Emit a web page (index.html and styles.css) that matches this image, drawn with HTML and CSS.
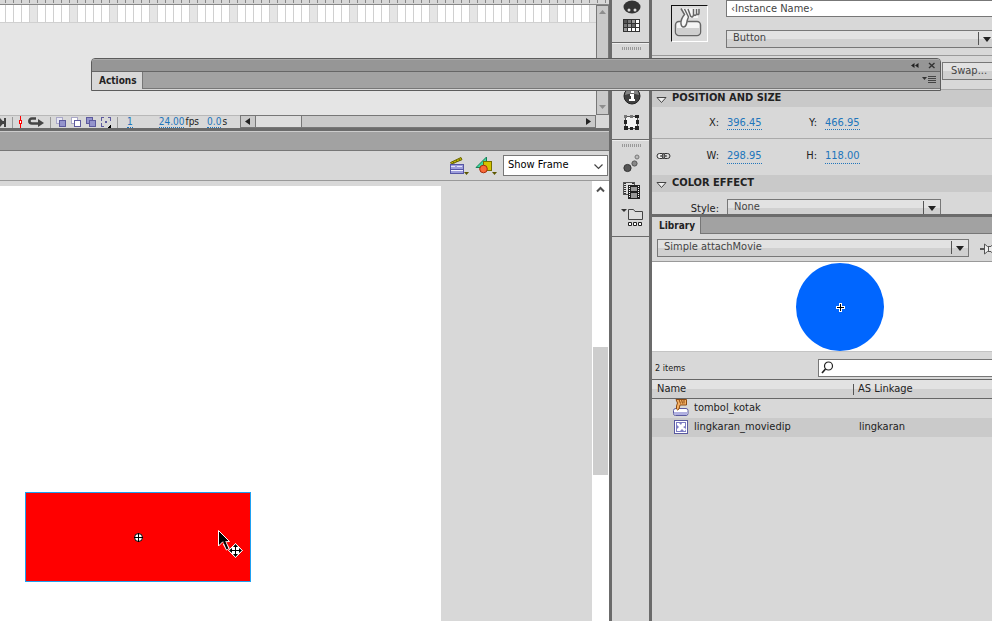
FILE: index.html
```html
<!DOCTYPE html>
<html lang="en">
<head>
<meta charset="utf-8">
<title>Simple attachMovie</title>
<link rel="stylesheet" href="styles.css">
</head>
<body>
<div class="app">
  <main class="workspace">
    <section class="timeline" aria-label="Timeline">
      <div class="frames-area">
        <div class="ruler"></div>
        <div class="frames-body">
          <div class="frames"><div class="frame-row"></div></div>
          <div class="vscroll" aria-hidden="true">
            <svg width="7" height="5"><path d="M0 4L3.5 0L7 4z" fill="#8d8d8d"/></svg>
            <svg width="7" height="5"><path d="M0 0L3.500 4L7 0z" fill="#8d8d8d"/></svg>
          </div>
        </div>
      </div>
      <div class="status">
        <div class="status-tools">
          <button class="tool end" aria-label="Last frame"><svg width="7" height="11"><path d="M0 1L4 5.500L0 10z" fill="#444"/><path d="M0 4h4v3H0zM4 1h2v9H4z" fill="#444"/></svg></button>
          <i class="rule"></i>
          <button class="tool" aria-label="Center frame"><svg width="5" height="12" shape-rendering="crispEdges"><path d="M2 0h1v5H2zM2 8h1v4H2z" fill="#f00"/><path d="M1.500 4.500h2v3h-2z" fill="#fff" stroke="#f00"/></svg></button>
          <button class="tool" aria-label="Loop"><svg width="18" height="12"><path d="M9 2.500H5C1.500 2.500 1.500 7.500 5 7.500H12" fill="none" stroke="#444" stroke-width="2.600"/><path d="M11 3L17 7L11 11z" fill="#444"/></svg></button>
          <i class="rule"></i>
          <button class="tool" aria-label="Onion skin"><svg width="11" height="11" shape-rendering="crispEdges"><rect x=".5" y=".5" width="6" height="6" fill="#e8e8f4" stroke="#aaa8c8"/><rect x="3.500" y="3.500" width="6" height="6" fill="#9494cc" stroke="#5d5a9e"/></svg></button>
          <button class="tool" aria-label="Onion skin outlines"><svg width="11" height="11" shape-rendering="crispEdges"><rect x=".5" y=".5" width="6" height="6" fill="#fff" stroke="#aaa8c8"/><rect x="3.500" y="3.500" width="6" height="6" fill="#fff" stroke="#5d5a9e"/></svg></button>
          <button class="tool" aria-label="Edit multiple frames"><svg width="11" height="11" shape-rendering="crispEdges"><rect x=".5" y=".5" width="6" height="6" fill="#9494cc" stroke="#5d5a9e"/><rect x="3.500" y="3.500" width="6" height="6" fill="#9494cc" stroke="#5d5a9e"/></svg></button>
          <button class="tool" aria-label="Modify markers"><svg width="11" height="11" shape-rendering="crispEdges"><path d="M3 .5H.5V4M.5 6v3.500H3M7 .5h2.500V4" fill="none" stroke="#5d5a9e"/><path d="M4 4h2v2H4z" fill="#5d5a9e"/><path d="M10 7v4H6z"/></svg></button>
          <i class="rule"></i>
          <span class="hot frame-no">1</span>
          <span class="reading fps"><span class="hot">24.00</span><span>fps</span></span>
          <span class="reading"><span class="hot">0.0</span><span>s</span></span>
        </div>
        <div class="hscroll" aria-hidden="true">
          <svg width="14" height="11"><path d="M9 2v7L4 5.500z" fill="#222"/></svg>
          <span class="hthumb"></span>
          <svg width="14" height="11"><path d="M5 2v7L10 5.500z" fill="#222"/></svg>
        </div>
      </div>
    </section>
    <div class="doc-tabs"></div>
    <div class="edit-bar">
      <button class="tool" aria-label="Edit scene"><svg width="20" height="20"><path d="M1.500 6.500L12 1.500l1 2.200L2.500 8z" fill="#c4bb00" stroke="#6a6400"/><path d="M4 5.500l1 2M7 4l1 2M10 3l1 2" stroke="#6a6400"/><rect x="1.500" y="8.500" width="13" height="9" fill="#f1f1fc" stroke="#5656a4"/><path d="M2 9h12v4H2zM2 15h12v2H2z" fill="#9d9ddc"/><path d="M2 10.500h4M8 10.500h5" stroke="#e4e4fa"/><path d="M2 13.500h12" stroke="#5656a4"/><path d="M15 16h5l-2.500 3z" fill="#5c5700"/></svg></button>
      <button class="tool" aria-label="Edit symbols"><svg width="22" height="20"><path d="M1 11.500L11.500 1v10.500z" fill="#3fd9a0" stroke="#158057"/><rect x="8.500" y="5.500" width="8" height="9" fill="#d3c400" stroke="#776f00"/><circle cx="8.500" cy="13" r="3.800" fill="#fa6a38" stroke="#a52c0b"/><path d="M17 16h5l-2.500 3z" fill="#5c5700"/></svg></button>
      <div class="picker zoom-picker">
        <select aria-label="Zoom"><option>Show Frame</option></select>
        <svg width="9" height="6"><path d="M.5 .5L4.500 4.500L8.500 .5" fill="none" stroke="#444" stroke-width="1.200"/></svg>
      </div>
    </div>
    <div class="stage-area">
      <div class="pasteboard">
        <div class="canvas">
          <div class="shape">
            <svg width="9" height="9"><circle cx="4.500" cy="4.500" r="4" fill="#fff" stroke="#000"/><path d="M4.500 0v9M0 4.500h9" stroke="#000"/></svg>
          </div>
          <svg class="cursor" width="27" height="29">
            <path d="M6.500 13L10 19.500" stroke="#fff" stroke-width="4"/>
            <path d="M.5 .5V16L4.500 12L11.500 11.500z" fill="#000" stroke="#fff"/>
            <path d="M6 11L9.500 19" stroke="#000" stroke-width="2"/>
            <path d="M17.500 13.500L24.500 20.500L17.500 27.500L10.500 20.500z" fill="#fff" stroke="#fff"/>
            <path d="M17.500 15v11M12 20.500h11" stroke="#000"/>
            <path d="M17.500 14l2.500 3h-5zM17.500 27l2.500-3h-5zM11 20.500l3-2.500v5zM24 20.500l-3-2.500v5z"/>
          </svg>
        </div>
      </div>
      <div class="stage-scroll" aria-hidden="true">
        <svg width="9" height="7"><path d="M1 5.500L4.500 2L8 5.500" fill="none" stroke="#505050" stroke-width="2"/></svg>
        <span class="stage-thumb"></span>
      </div>
    </div>
  </main>

  <nav class="dock" aria-label="Panels">
    <div class="dock-group first">
      <button class="tool" aria-label="Color"><svg width="20" height="20"><ellipse cx="10" cy="9" rx="8.500" ry="6.500" fill="#333"/><circle cx="7" cy="12" r="1.500" fill="#ddd"/><circle cx="13" cy="12" r="1.500" fill="#ddd"/></svg></button>
      <button class="tool" aria-label="Swatches"><svg width="20" height="16" shape-rendering="crispEdges"><rect x="1" y="1" width="17" height="13" fill="#333"/><path fill="#555" d="M2 2h3v3H2z"/><path fill="#777" d="M6 2h3v3H6zM2 6h3v3H2z"/><path fill="#999" d="M10 2h3v3h-3zM6 6h3v3H6zM2 10h3v3H2z"/><path fill="#666" d="M10 6h3v3h-3z"/><path fill="#fff" d="M14 2h3v3h-3zM14 6h3v3h-3zM6 10h3v3H6zM10 10h3v3h-3zM14 10h3v3h-3z"/></svg></button>
    </div>
    <div class="dock-group second">
      <i class="grip"></i>
      <button class="tool info" aria-label="Info"><svg width="20" height="20"><circle cx="10" cy="10" r="8" fill="#404040" stroke="#222"/><path d="M3 9a7 7 0 0 1 14 0q-7-3-14 0" fill="#858585"/><path d="M8 8h4v5h1v2H7v-2h2v-3H8zM9 5h3v2H9z" fill="#fff"/></svg></button>
      <button class="tool" aria-label="Transform"><svg width="20" height="18"><rect x="3.500" y="2.500" width="12" height="12" fill="#f3f3f3" stroke="#555"/><path d="M2 6h3v4H2zM14 6h3v4h-3zM2 12h4v4H2zM13 12h4v4h-4zM8 13h3v3H8zM13 1h4v3h-4z" fill="#222"/><path d="M2 1h3v3H2zM8 1h3v3H8z" fill="#777"/></svg></button>
    </div>
    <div class="dock-group third">
      <i class="grip"></i>
      <button class="tool" aria-label="Motion presets"><svg width="20" height="20"><circle cx="5.500" cy="14" r="3.600" fill="#555" stroke="#333"/><circle cx="12.500" cy="9.500" r="2.600" fill="#888" stroke="#555"/><circle cx="15" cy="3" r="2" fill="#bbb" stroke="#777"/></svg></button>
      <button class="tool" aria-label="Movie explorer"><svg width="20" height="20"><rect x="1.500" y="1.500" width="11" height="12" fill="#ddd" stroke="#555"/><path d="M3 2v12M11 2v3" stroke="#333" stroke-width="2" stroke-dasharray="1 1"/><rect x="6" y="4" width="12" height="14" fill="#222"/><path d="M9 6h6v4H9zM9 12h6v5H9z" fill="#999"/><path d="M7.500 5v12M16.500 5v12" stroke="#fff" stroke-dasharray="1 1"/></svg></button>
      <button class="tool" aria-label="Project"><svg width="22" height="20"><path d="M0 1h6L3 4z" fill="#333"/><path d="M7.500 11.500V1.500h5l1.500 2h7.500v8z" fill="#ddd" stroke="#444"/><path d="M7.500 14.500h3v3h-3zM12.500 14.500h3v3h-3zM17.500 14.500h3v3h-3z" fill="#fff" stroke="#222"/></svg></button>
    </div>
  </nav>

  <aside class="panels">
    <section class="properties" aria-label="Properties">
      <div class="instance">
        <div class="symbol-icon"><svg width="33" height="33" viewBox="0 0 33 33"><rect x="3.500" y="15.500" width="25" height="14" rx="3.500" fill="#f4f4f4" stroke="#666" stroke-width="1.500"/><path d="M4.500 22h23v4q0 2.500-2.500 2.500H7q-2.500 0-2.500-2.500z" fill="#cfcfcf"/><path d="M9 2.500L12 8Q8.500 13 9 18q.5 3 2.500 3t3-3l1.500-6h10V2.500z" fill="#f7f7f7"/><path d="M9 2.500L12.500 8.500Q8.500 13 9 18q.5 3 2.500 3t3-3Q15 14 16.500 11L12.500 3M16 3l2.500 7q2 2.500 3-1V3M21.500 8q1.500 3 3 0V3M24.500 8q2.500 1.500 2.500-1V3" fill="none" stroke="#666" stroke-width="1.500"/></svg></div>
        <div class="instance-fields">
          <input class="name-field" type="text" aria-label="Instance name" value="‹Instance Name›">
          <div class="picker flat"><select aria-label="Symbol behavior"><option>Button</option></select><svg width="14" height="13"><path d="M.5 0v13" stroke="#555"/><path d="M5 5h8l-4 5z" fill="#222"/></svg></div>
        </div>
      </div>
      <div class="swap-row"><button class="swap">Swap...</button></div>
      <h2 class="section-head"><svg width="11" height="8"><path d="M1 1.500h9L5.500 6.500z" fill="#eee" stroke="#444"/></svg>POSITION AND SIZE</h2>
      <div class="coords top">
        <label for="px">X:</label><input id="px" class="hot" value="396.45">
        <label for="py">Y:</label><input id="py" class="hot" value="466.95">
      </div>
      <div class="coords bottom">
        <button class="tool link" aria-label="Lock width and height"><svg width="15" height="9"><rect x="1" y="1.500" width="8" height="5" rx="2.500" fill="#eee" stroke="#333"/><rect x="6" y="1.500" width="8" height="5" rx="2.500" fill="none" stroke="#333"/><path d="M4 4h7" stroke="#333"/></svg></button>
        <label for="pw">W:</label><input id="pw" class="hot" value="298.95">
        <label for="ph">H:</label><input id="ph" class="hot" value="118.00">
      </div>
      <h2 class="section-head"><svg width="11" height="8"><path d="M1 1.500h9L5.500 6.500z" fill="#eee" stroke="#444"/></svg>COLOR EFFECT</h2>
      <div class="style-row">
        <label for="style">Style:</label>
        <div class="picker flat"><select id="style"><option>None</option></select><svg width="14" height="13"><path d="M.5 0v13" stroke="#555"/><path d="M5 5h8l-4 5z" fill="#222"/></svg></div>
      </div>
    </section>
    <section class="library" aria-label="Library">
      <div class="tabs"><button class="tab">Library</button><span class="tabs-rest"></span></div>
      <div class="doc-row">
        <div class="picker flat"><select aria-label="Document"><option>Simple attachMovie</option></select><svg width="14" height="13"><path d="M.5 0v13" stroke="#555"/><path d="M5 5h8l-4 5z" fill="#222"/></svg></div>
        <button class="tool pin" aria-label="Pin library"><svg width="18" height="12"><path d="M0 6h5" stroke="#555" stroke-width="2"/><path d="M4.500 1v10l3-2.500h3.500l2 2.500V1l-2 2.500H7.500z" fill="#eee" stroke="#555"/><path d="M8.500 4v4" stroke="#555"/></svg></button>
      </div>
      <div class="preview"><svg width="88" height="88"><circle cx="44" cy="44" r="44" fill="#06f"/><path d="M44.500 40v9M40 44.500h9" stroke="#fff" stroke-width="3"/><path d="M44.500 41v7M41 44.500h7" stroke="#000"/></svg></div>
      <div class="search-row">
        <span class="count">2 items</span>
        <label class="search"><svg width="13" height="13"><circle cx="7.500" cy="5" r="4" fill="#fff" stroke="#222" stroke-width="1.200"/><path d="M4.500 8L1 12" stroke="#222" stroke-width="1.600"/></svg><input type="text" aria-label="Search library"></label>
      </div>
      <table class="items">
        <thead><tr><th>Name</th><th>AS Linkage</th></tr></thead>
        <tbody>
          <tr><td><span class="item"><svg width="16" height="18"><path d="M3 9.500h10q2 0 2 2v3q0 2-2 2H2.500q-2 0-2-2v-3q0-2 2.500-2z" fill="#fff" stroke="#5a5aa0"/><path d="M1 13h13.500v1.500q0 1.500-2 1.500h-9Q1 16 1 14.500z" fill="#b0b0e0"/><path d="M3 .5L4.500 4Q3 7 3.500 10q1 2 2.500 0l1-4h6.500V.5z" fill="#f4b064" stroke="#8a4a12"/><path d="M6 .5l1.500 4M8.500 .5l1 4M11 .5v4" stroke="#8a4a12"/></svg>tombol_kotak</span></td><td></td></tr>
          <tr class="selected"><td><span class="item"><svg width="16" height="18"><rect x="1.500" y="2.500" width="13" height="13" fill="#fff" stroke="#5a5aa0"/><path d="M3 4h10v10H3z" fill="#7c7cc4"/><path d="M4 5h2l2 2 1-2h3v3l-2 1 3 2-1 2h-1l-2-2-2 2H4v-2l2-2-2-2z" fill="#fff"/></svg>lingkaran_moviedip</span></td><td>lingkaran</td></tr>
        </tbody>
      </table>
    </section>
  </aside>
</div>

<section class="actions" aria-label="Actions">
  <div class="actions-title">
    <button class="tool" aria-label="Collapse"><svg width="8" height="7"><path d="M3.500 1v5L0 3.500zM7.500 1v5L4 3.500z" fill="#222"/></svg></button>
    <button class="tool" aria-label="Close"><svg width="8" height="7"><path d="M1 1L6.500 6M6.500 1L1 6" stroke="#333" stroke-width="1.400"/></svg></button>
  </div>
  <div class="actions-tabs">
    <button class="tab">Actions</button>
    <div class="tabs-rest"><button class="tool" aria-label="Panel menu"><svg width="14" height="8"><path d="M0 1h5L2.500 4z" fill="#333"/><path d="M6 .5h8M6 2.500h8M6 4.500h8M6 6.500h8" stroke="#444"/></svg></button></div>
  </div>
</section>
</body>
</html>
```
FILE: styles.css
```css
* { box-sizing: border-box; }
html, body { height: 100%; margin: 0; overflow: hidden; }
body {
  font: 11px/14px "DejaVu Sans Condensed", "DejaVu Sans", sans-serif;
  color: #222;
  background: #d8d8d8;
}
button, input, select { font: inherit; color: inherit; margin: 0; padding: 0; border: 0; background: none; border-radius: 0; }
svg { display: block; flex: none; }
.tool { display: block; flex: none; }
.hot { color: #2175bb; border-bottom: 1px dotted #2175bb; }

.app { display: grid; grid-template-columns: minmax(0, 1fr) 43px 340px; height: 100%; }
.workspace { display: flex; flex-direction: column; min-width: 0; min-height: 0; }

/* timeline */
.timeline { background: #e5e5e5; border-bottom: 3px solid #6b6b6b; }
.ruler { height: 5px; border-bottom: 1px solid #888; background: repeating-linear-gradient(90deg, transparent 0 5px, #888 5px 6px, transparent 6px 8px) 0 0 / 100% 3px no-repeat #d8d8d8; }
.frames-body { display: flex; height: 110px; }
.frames { flex: 1; }
.frame-row {
  height: 18px;
  border-bottom: 1px solid #d0d0d0;
  background:
    repeating-linear-gradient(90deg, transparent 0 5px, #d0d0d0 5px 6px, transparent 6px 8px),
    repeating-linear-gradient(90deg, #fff 0 29px, #e5e5e5 29px 37px, #fff 37px 40px);
}
.vscroll { width: 13px; border: 1px solid #777; background: #c9c9c9; display: flex; flex-direction: column; justify-content: space-between; align-items: center; padding: 4px 0; }
.status { display: flex; height: 13px; background: #d8d8d8; padding-right: 13px; }
.status-tools { flex: 0 0 240px; display: flex; align-items: center; gap: 4px; border-top: 1px solid #b8b8b8; white-space: nowrap; font-size: 10px; line-height: 10px; }
.rule { width: 1px; height: 11px; background: #999; margin: 0 1px; }
.frame-no { margin: 0 22px 0 4px; }
.reading { display: flex; gap: 1px; }
.fps { margin-right: 4px; }
.hscroll { flex: 1; display: flex; border: 1px solid #777; background: #c9c9c9; }
.hthumb { width: 47px; border: 1px solid #777; border-width: 0 1px; background: #dedede; }
.hscroll svg:last-child { margin-left: auto; }

/* document window */
.doc-tabs { height: 20px; background: #a2a2a2; border-top: 1px solid #ccc; border-bottom: 1px solid #777; }
.edit-bar { display: flex; align-items: center; justify-content: flex-end; gap: 6px; height: 30px; padding-right: 1px; border-bottom: 1px solid #999; }
.picker { position: relative; display: flex; }
.picker select { appearance: none; flex: 1; min-width: 0; }
.picker svg { position: absolute; pointer-events: none; }
.zoom-picker { width: 105px; height: 21px; border: 1px solid #777; background: #fff; color: #000; }
.zoom-picker select { padding: 0 4px 2px; }
.zoom-picker svg { right: 4px; top: 8px; }
.stage-area { flex: 1; display: flex; min-height: 0; }
.pasteboard { flex: 1; padding-top: 5px; min-width: 0; }
.canvas { position: relative; width: 441px; height: 100%; background: #fff; }
.shape { position: absolute; left: 25px; top: 306px; width: 226px; height: 90px; border: 1px solid #1ea0f0; background: #f00; display: flex; align-items: center; justify-content: center; }
.cursor { position: absolute; left: 218px; top: 344px; }
.stage-scroll { width: 17px; background: #fff; display: flex; flex-direction: column; align-items: center; padding-top: 5px; }
.stage-thumb { margin-top: 154px; width: 15px; height: 128px; background: #cdcdcd; }

/* icon dock */
.dock { border: solid #6b6b6b; border-width: 0 3px; }
.dock-group { display: flex; flex-direction: column; align-items: center; padding-left: 2px; border-bottom: 1px solid #6b6b6b; }
.first { height: 43px; justify-content: flex-end; padding-bottom: 8px; }
.second { height: 97px; border-top: 1px solid #eee; padding-top: 3px; }
.third { height: 97px; border-top: 1px solid #eee; padding-top: 3px; gap: 7px; }
.info { margin: 36px 0 8px; }
.grip { flex: none; width: 20px; height: 3px; background: repeating-linear-gradient(90deg, #999 0 1px, transparent 1px 2px); }

/* properties */
.panels { display: flex; flex-direction: column; min-width: 0; overflow: hidden; }
.properties { height: 214px; overflow: hidden; flex: none; }
.flat { border: 1px solid #777; background: linear-gradient(#e2e2e2 0 50%, #d0d0d0 50%); height: 18px; color: #444; }
.flat select { padding: 0 20px 2px 6px; }
.flat svg { right: 3px; top: 1px; }
.instance { display: flex; height: 56px; border-bottom: 1px solid #999; padding-left: 19px; }
.symbol-icon { width: 37px; height: 37px; margin: 5px 18px 0 0; border: 1px solid #fff; border-top-color: #111; border-left-color: #111; background: #dcdcdc; flex: none; }
.instance-fields { flex: 1; display: flex; flex-direction: column; gap: 13px; margin-right: -4px; }
.name-field { height: 17px; border: 1px solid #777; background: #fff; padding: 0 4px; color: #444; width: 100%; }
.swap-row { height: 34px; border-bottom: 1px solid #aaa; padding-top: 6px; display: flex; justify-content: flex-end; }
.swap { width: 54px; height: 18px; margin-right: -4px; border: 1px solid #777; background: linear-gradient(#e2e2e2 0 50%, #d0d0d0 50%); color: #444; }
.section-head { margin: 0; height: 17px; background: #c9c9c9; font-size: 11px; line-height: 16px; font-weight: bold; display: flex; gap: 5px; padding-left: 4px; }
.section-head svg { margin-top: 6px; }
.coords { display: grid; grid-template-columns: 67px 35px 47px 35px; column-gap: 8px; align-items: center; position: relative; }
.coords label { text-align: right; }
.coords input { height: 15px; width: 35px; }
.coords.top { height: 32px; border-bottom: 1px solid #aaa; }
.coords.bottom { height: 36px; padding-bottom: 2px; }
.link { position: absolute; left: 4px; top: 13px; }
.style-row { display: flex; align-items: flex-start; padding-top: 7px; }
.style-row label { width: 67px; margin-right: 8px; text-align: right; padding-top: 3px; }
.style-row .picker { width: 214px; }

/* library */
.library { flex: 1; border-top: 3px solid #6b6b6b; }
.tabs { display: flex; height: 17px; }
.tab { font-weight: bold; font-size: 10px; line-height: 16px; padding: 0 5px 0 7px; background: #d8d8d8; }
.tabs-rest { flex: 1; background: #a2a2a2; border: 1px solid #777; border-width: 0 0 1px 1px; }
.doc-row { display: flex; gap: 11px; padding: 5px 0 0 5px; height: 28px; border-bottom: 1px solid #999; }
.doc-row .picker { width: 312px; flex: none; }
.pin { padding-top: 4px; align-self: flex-start; }
.preview { height: 90px; padding-top: 1px; background: #fff; display: flex; justify-content: center; padding-left: 36px; border-bottom: 1px solid #c4c4c4; }
.search-row { height: 27px; display: flex; align-items: center; padding-left: 3px; justify-content: space-between; font-size: 9px; padding-top: 4px; }
.search { width: 174px; height: 18px; border: 1px solid #777; border-right: 0; background: #fff; display: flex; align-items: center; padding-left: 2px; }
.search input { flex: 1; min-width: 0; }
.items { width: 100%; border-spacing: 0; table-layout: fixed; }
.items th { height: 20px; padding: 0 5px 1px; text-align: left; font-weight: normal; border: solid #666; border-width: 1px 0; background: linear-gradient(#e2e2e2 0 50%, #d0d0d0 50%); }
.items th:first-child { width: 201px; }
.items td { height: 19px; padding: 0 6px 1px; }
.items th + th { background: linear-gradient(#555, #555) 0 4px / 1px 11px no-repeat, linear-gradient(#e2e2e2 0 50%, #d0d0d0 50%); }
.selected { background: #cacaca; }
.item { display: flex; gap: 5px; align-items: center; padding-left: 15px; height: 18px; }

/* floating panel */
.actions { position: absolute; left: 91px; right: 51px; top: 58px; border: 1px solid #5c5c5c; border-radius: 4px 4px 0 0; background: #d8d8d8; overflow: hidden; }
.actions-title { height: 13px; background: #969696; border-top: 1px solid #aaa; border-bottom: 1px solid #666; display: flex; align-items: center; justify-content: flex-end; gap: 9px; padding-right: 4px; }
.actions-tabs { display: flex; height: 18px; padding-bottom: 1px; }
.actions-tabs .tabs-rest { display: flex; justify-content: flex-end; align-items: center; padding-right: 4px; }
```
